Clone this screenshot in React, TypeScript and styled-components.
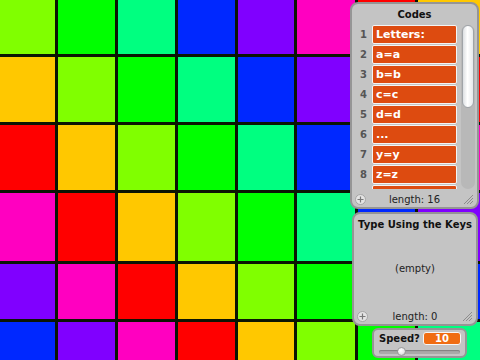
import React from "react";
import styled, { createGlobalStyle } from "styled-components";

const GlobalStyle = createGlobalStyle`
  html, body {
    margin: 0;
    padding: 0;
    overflow: hidden;
    background: #ffffff;
  }
`;

const PALETTE = [
  "#ff0000",
  "#ffc800",
  "#80ff00",
  "#00ff00",
  "#00ff80",
  "#0028ff",
  "#8000ff",
  "#ff00c0",
];

const COLS = 8;
const ROWS = 6;

const Stage = styled.div`
  position: relative;
  width: 480px;
  height: 360px;
  overflow: hidden;
  font-family: "DejaVu Sans", Verdana, sans-serif;
`;

const Board = styled.div`
  display: grid;
  grid-template-columns: 55px 57px 57px 57px 56px 58px 57px 1fr;
  grid-template-rows: 54px 65px 65px 68px 55px 1fr;
  gap: 3px;
  width: 480px;
  height: 360px;
  background: #0b1503;
`;

const Cell = styled.div<{ $color: string }>`
  background: ${(p) => p.$color};
`;

const Monitor = styled.div<{ $x: number; $y: number; $w: number; $h: number }>`
  position: absolute;
  left: ${(p) => p.$x}px;
  top: ${(p) => p.$y}px;
  width: ${(p) => p.$w}px;
  height: ${(p) => p.$h}px;
  box-sizing: border-box;
  background: #c4c4c4;
  border: 2px solid #959595;
  border-radius: 8px;
  display: flex;
  flex-direction: column;
`;

const MonitorTitle = styled.div`
  text-align: center;
  font-size: 10px;
  font-weight: bold;
  color: #111;
  padding-top: 5px;
  height: 14px;
  white-space: nowrap;
`;

const ListBody = styled.div`
  flex: 1;
  display: flex;
  gap: 3px;
  padding: 2px 0 0 4px;
  overflow: hidden;
`;

const Items = styled.div`
  display: flex;
  flex-direction: column;
  gap: 1px;
  height: 164px;
  overflow: hidden;
`;

const ItemRow = styled.div`
  display: flex;
  align-items: center;
  gap: 5px;
  height: 19px;
  flex-shrink: 0;
`;

const Index = styled.span`
  width: 11px;
  text-align: right;
  font-size: 10px;
  font-weight: bold;
  color: #555;
`;

const Item = styled.div`
  width: 85px;
  height: 19px;
  box-sizing: border-box;
  background: #dd4b10;
  border: 1px solid #f4f4f4;
  border-radius: 2px;
  color: #fff;
  font-size: 11px;
  font-weight: bold;
  line-height: 17px;
  padding-left: 3px;
`;

const Track = styled.div`
  width: 14px;
  height: 164px;
  margin-left: 1px;
  border-radius: 7px;
  background: #b8b8b8;
  display: flex;
  justify-content: center;
`;

const Thumb = styled.div`
  width: 12px;
  height: 83px;
  border-radius: 6px;
  box-sizing: border-box;
  border: 1px solid #a0a4a8;
  background: linear-gradient(90deg, #dcdfe2 0%, #ffffff 45%, #e6e9ec 100%);
`;

const Footer = styled.div`
  height: 16px;
  display: flex;
  align-items: center;
  padding: 0 4px 0 3px;
`;

const AddIcon = styled.svg`
  width: 11px;
  height: 11px;
  flex-shrink: 0;
`;

const Length = styled.div`
  flex: 1;
  text-align: center;
  font-size: 10px;
  color: #222;
`;

const Grip = styled.svg`
  width: 10px;
  height: 10px;
  flex-shrink: 0;
`;

const EmptyText = styled.div`
  flex: 1;
  display: flex;
  align-items: center;
  justify-content: center;
  font-size: 10px;
  color: #222;
  padding-bottom: 4px;
`;

const VarMonitor = styled.div`
  position: absolute;
  left: 372px;
  top: 328px;
  width: 95px;
  height: 30px;
  box-sizing: border-box;
  background: #c4c4c4;
  border: 2px solid #959595;
  border-radius: 6px;
  padding: 2px 4px 0 5px;
  display: flex;
  flex-direction: column;
  gap: 3px;
`;

const VarRow = styled.div`
  display: flex;
  align-items: center;
  justify-content: space-between;
`;

const VarLabel = styled.span`
  font-size: 10px;
  font-weight: bold;
  color: #111;
`;

const VarValue = styled.span`
  width: 38px;
  height: 13px;
  box-sizing: border-box;
  background: #f06c12;
  border: 1px solid #f6f6f6;
  border-radius: 3px;
  color: #fff;
  font-size: 10px;
  font-weight: bold;
  line-height: 11px;
  text-align: center;
`;

const Slider = styled.div`
  position: relative;
  height: 4px;
  margin: 2px 1px 0 0;
  border-radius: 2px;
  background: #a9a9a9;
  box-shadow: inset 0 1px 1px #7f7f7f;
`;

const Knob = styled.div`
  position: absolute;
  left: 18px;
  top: -3px;
  width: 9px;
  height: 9px;
  border-radius: 50%;
  background: radial-gradient(circle at 40% 35%, #ffffff 0%, #e8e8e8 55%, #a9a9a9 100%);
  border: 1px solid #9a9a9a;
  box-sizing: border-box;
`;

const codes = ["Letters:", "a=a", "b=b", "c=c", "d=d", "...", "y=y", "z=z", ""];

const AddButton = () => (
  <AddIcon viewBox="0 0 11 11">
    <circle cx="5.5" cy="5.5" r="5" fill="#e4e4e4" stroke="#a5a5a5" />
    <path d="M5.5 2.5v6M2.5 5.5h6" stroke="#7a7a7a" strokeWidth="1.2" />
  </AddIcon>
);

const ResizeGrip = () => (
  <Grip viewBox="0 0 10 10">
    <line x1="1" y1="10" x2="10" y2="1" stroke="#8c8c8c" strokeWidth="1" />
    <line x1="4" y1="10" x2="10" y2="4" stroke="#8c8c8c" strokeWidth="1" />
    <line x1="7" y1="10" x2="10" y2="7" stroke="#8c8c8c" strokeWidth="1" />
  </Grip>
);

const App = () => {
  const cells = [];
  for (let r = 0; r < ROWS; r++) {
    for (let c = 0; c < COLS; c++) {
      const idx = (((c - r + 2) % 8) + 8) % 8;
      cells.push(<Cell key={`${r}-${c}`} $color={PALETTE[idx]} />);
    }
  }

  return (
    <>
      <GlobalStyle />
      <Stage>
        <Board>{cells}</Board>

        <Monitor $x={350} $y={2} $w={129} $h={207}>
          <MonitorTitle>Codes</MonitorTitle>
          <ListBody>
            <Items>
              {codes.map((code, i) => (
                <ItemRow key={i}>
                  <Index>{i + 1}</Index>
                  <Item>{code}</Item>
                </ItemRow>
              ))}
            </Items>
            <Track>
              <Thumb />
            </Track>
          </ListBody>
          <Footer>
            <AddButton />
            <Length>length: 16</Length>
            <ResizeGrip />
          </Footer>
        </Monitor>

        <Monitor $x={352} $y={212} $w={126} $h={114}>
          <MonitorTitle>Type Using the Keys</MonitorTitle>
          <EmptyText>(empty)</EmptyText>
          <Footer>
            <AddButton />
            <Length>length: 0</Length>
            <ResizeGrip />
          </Footer>
        </Monitor>

        <VarMonitor>
          <VarRow>
            <VarLabel>Speed?</VarLabel>
            <VarValue>10</VarValue>
          </VarRow>
          <Slider>
            <Knob />
          </Slider>
        </VarMonitor>
      </Stage>
    </>
  );
};

export default App;
